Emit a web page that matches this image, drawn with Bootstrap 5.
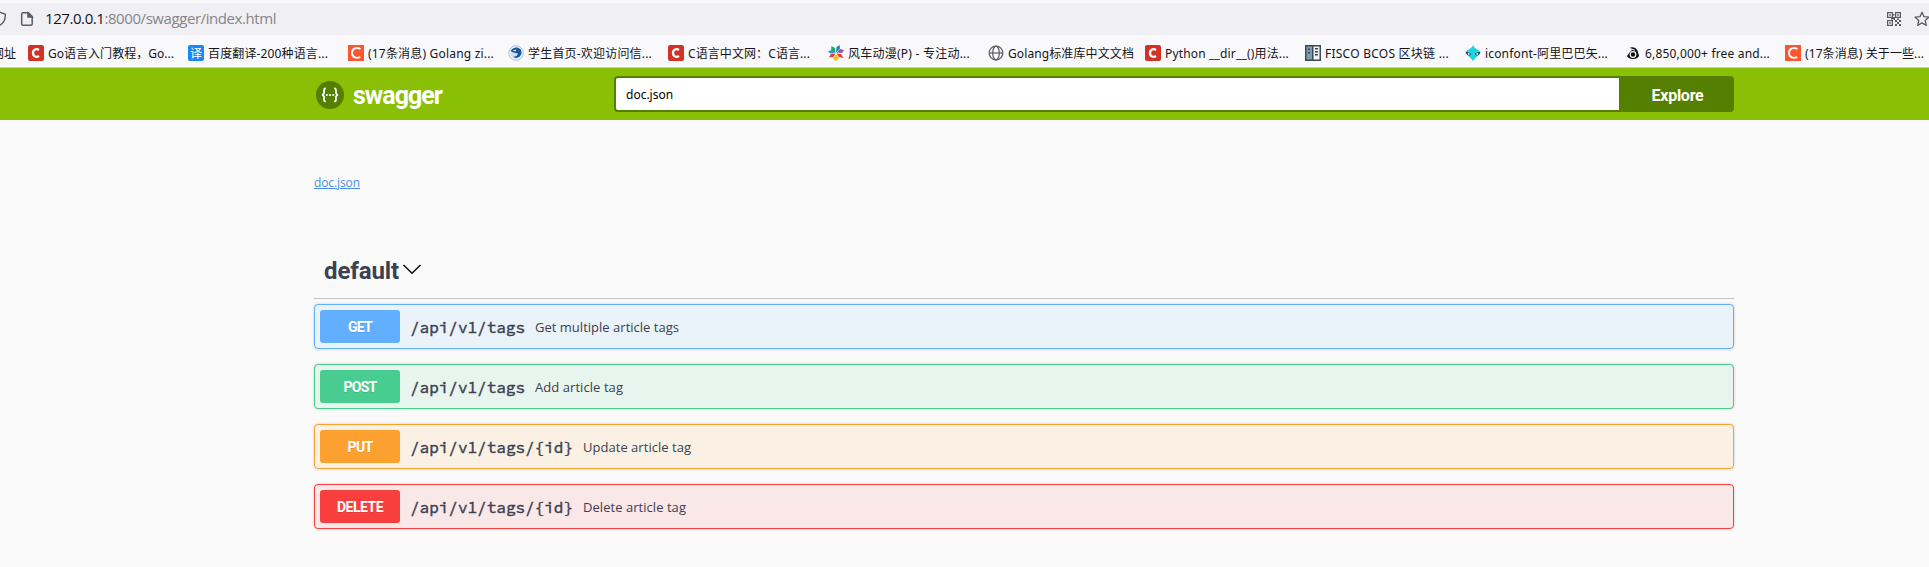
<!DOCTYPE html>
<html lang="zh-CN">
<head>
<meta charset="utf-8">
<title>Swagger UI</title>
<link rel="stylesheet" href="https://cdn.jsdelivr.net/npm/bootstrap@5.3.0/dist/css/bootstrap.min.css">
<style>
body{background:#fafafa;font-family:"Open Sans","Noto Sans CJK SC",sans-serif;color:#3b4151;overflow:hidden}
.chrome{background:#f9f9fb;height:68px;padding-top:3px;border-bottom:1px solid #ccccd1;color:#15141a}
.urlbar{height:32px;background:#f0f0f4;padding-left:20px;position:relative}
.url{font:15px "Open Sans",sans-serif;margin-left:11px;margin-bottom:2px;color:#15141a;white-space:nowrap}
.url i{font-style:normal;color:#85858b}
.shield{position:absolute;left:-9px;top:8px}
.star{margin:0 -1px 0 13px}
.marks{height:32px;position:relative;padding-left:28px;font:12px/16px "Noto Sans","Noto Sans CJK SC",sans-serif;white-space:nowrap}
.cut{position:absolute;left:-8px;top:11px}
.bm{width:160px;flex:none;padding-top:4px}
.bm svg{width:16px;height:16px;flex:none}
.bm span{position:relative;top:1px}
.bm.narrow{width:157px}
.topbar{background:#89bf04;height:52px}
.wrap{width:1420px;margin-left:314px}
.brand{width:300px;padding-left:2px}
.brand svg{position:relative;top:1px}
.brand span{font:700 25px/30px Roboto,sans-serif;color:#fff;margin-left:9px;padding-top:3px}
.topbar .form-control{width:1007px;height:36px;border:2px solid #547f00;border-radius:4px 0 0 4px;padding:0 10px;font:12px "Noto Sans",sans-serif;color:#000;background:#fff}
.topbar .btn{width:113px;height:36px;background:#547f00;border:0;border-radius:0 4px 4px 0;padding:2px 0 0;color:#fff;font:700 16px Roboto,sans-serif}
.doclink{margin-top:54px;height:18px;font-size:12px;line-height:18px}
.doclink a{color:#4990e2}
.taghead{margin-top:58px;height:49px;border-bottom:1px solid #c2c3c7;padding:0 10px 6px}
.taghead h4{font:700 24px/30px Roboto,sans-serif;margin:0 3px 0 0}
.taghead svg{margin-top:-2px}
.op{height:45px;border:1px solid;border-radius:4px;padding:0 5px;margin-bottom:15px;box-shadow:0 0 3px rgba(0,0,0,.19)}
.method{width:80px;height:33px;border-radius:3px;color:#fff;font:700 14px/34px Roboto,sans-serif;text-shadow:0 1px 0 rgba(0,0,0,.1)}
.route{font:16px "Source Code Pro","DejaVu Sans Mono",monospace;-webkit-text-stroke:.45px #3b4151;margin-left:10px}
.desc{font-size:13px;margin-left:10px;padding-top:2px}
.get{border-color:#61affe;background:#eaf2fa}.get .method{background:#61affe}
.post{border-color:#49cc90;background:#e8f4ee}.post .method{background:#49cc90}
.put{border-color:#fca130;background:#faf1e4}.put .method{background:#fca130}
.delete{border-color:#f93e3e;background:#fae7e7}.delete .method{background:#f93e3e}
</style>
</head>
<body>
<svg width="0" height="0" class="position-absolute"><defs>
<symbol id="c-red" viewBox="0 0 16 16"><rect width="16" height="16" rx="2" fill="#d33327"/><path d="M11 4.900C8.500 3.400 5 4.300 5 8s3.500 4.600 6 3.100" fill="none" stroke="#fff" stroke-width="2.300"/></symbol>
<symbol id="c-orange" viewBox="0 0 16 16"><rect width="16" height="16" fill="#fc5531"/><path d="M12.500 4C9 1.900 4 3.200 4 8s5 5.800 8.300 4" fill="none" stroke="#fff" stroke-width="1.900"/></symbol>
</defs></svg>
<header class="chrome">
 <div class="urlbar d-flex align-items-center">
  <svg class="shield" width="16" height="16" viewBox="0 0 16 16" fill="none" stroke="#5b5b66" stroke-width="1.400"><path d="M8 1l6.300 2.300c.3 5-1.500 9-6.300 11.500C3.200 12.300 1.400 8.300 1.700 3.300z"/></svg>
  <svg width="14" height="16" viewBox="0 0 14 16" fill="none" stroke="#5b5b66" stroke-width="1.500"><path d="M3 1.800h5.500L12.200 5.500V13q0 1.300-1.300 1.300H3Q1.700 14.300 1.700 13V3.100Q1.700 1.800 3 1.800z"/><path d="M8 2v4h4z" fill="#5b5b66"/></svg>
  <span class="url" data-w="231">127.0.0.1<i>:8000/swagger/index.html</i></span>
  <svg class="ms-auto" width="14" height="14" viewBox="0 0 14 14"><path fill="none" stroke="#5b5b66" stroke-width="1.200" d="M.6.600h4.800v4.800H.6zM8.600.600h4.800v4.800H8.600zM.6 8.600h4.800v4.800H.6z"/><path fill="#5b5b66" d="M2.200 2.200h1.600v1.600H2.200zM10.200 2.200h1.600v1.600h-1.600zM2.200 10.200h1.600v1.600H2.200zM6 2h1.500v1.500H6zM6 5h2v2H6zM4 6h2v1.500H4zM8 8h2v2H8zM12 8h2v2h-2zM10 10h2v2h-2zM8 12h2v2H8zM12 12h2v2h-2zM6.500 7H8v1H6.500zM10 6.500h2V8h-2z"/></svg>
  <svg class="star" width="16" height="16" viewBox="0 0 16 16" fill="none" stroke="#5b5b66" stroke-width="1.300" stroke-linejoin="round"><path d="M8 1.200l2 4.500 4.900.5-3.700 3.300 1.100 4.900L8 11.900l-4.300 2.500 1.100-4.900L1.100 6.200 6 5.700z"/></svg>
 </div>
 <nav class="marks d-flex align-items-center">
  <span class="cut" data-w="24">网址</span>
  <div class="bm d-flex gap-1"><svg><use href="#c-red"/></svg><span data-w="126">Go语言入门教程，Go...</span></div>
  <div class="bm d-flex gap-1"><svg viewBox="0 0 16 16"><rect width="16" height="16" rx="2" fill="#1989fa"/><text x="2" y="12.500" font-size="12" fill="#fff">译</text></svg><span data-w="120">百度翻译-200种语言...</span></div>
  <div class="bm d-flex gap-1"><svg><use href="#c-orange"/></svg><span data-w="126">(17条消息) Golang zi...</span></div>
  <div class="bm d-flex gap-1"><svg viewBox="0 0 16 16"><circle cx="8" cy="8" r="7.300" fill="#eef4fa" stroke="#a9c2de"/><circle cx="8" cy="8" r="5.500" fill="#cfdfee"/><path d="M2.500 6Q5 2 9.500 2.500L13 4.500 13.500 8.500Q12 12.500 8 13L5 12Q9.500 11.500 10 8.500L5.500 7.500z" fill="#17569b"/><path d="M4.500 5.500l4-1-1 1.800z" fill="#fff"/></svg><span data-w="124">学生首页-欢迎访问信...</span></div>
  <div class="bm d-flex gap-1"><svg><use href="#c-red"/></svg><span data-w="122">C语言中文网：C语言...</span></div>
  <div class="bm d-flex gap-1"><svg viewBox="0 0 16 16"><path d="M7.500 8L3 5.500 3.500 1 7 3z" fill="#22b14c"/><path d="M8 7.500L8.500 2l3-2 .5 3.500z" fill="#1b7fd4"/><path d="M8.500 7.500L12 4l4 1-2 3z" fill="#8a5aa8"/><path d="M8.500 8.500l4.500.5 2.500 4-4.500-1z" fill="#e8392f"/><path d="M8 9l3 4-3 3-3-2z" fill="#fbb917"/><path d="M7.500 8.500L5 12.500l-4-.5L3 9z" fill="#e63a30"/><path d="M7 8L2 8.500 0 6l4.500-1z" fill="#1b9bd8"/></svg><span data-w="122">风车动漫(P) - 专注动...</span></div>
  <div class="bm narrow d-flex gap-1"><svg viewBox="0 0 16 16" fill="none" stroke="#5b5b66" stroke-width="1.200"><circle cx="8" cy="8" r="6.900"/><ellipse cx="8" cy="8" rx="3.300" ry="6.900"/><path d="M1 8h14"/></svg><span data-w="126">Golang标准库中文文档</span></div>
  <div class="bm d-flex gap-1"><svg><use href="#c-red"/></svg><span data-w="124">Python __dir__()用法...</span></div>
  <div class="bm d-flex gap-1"><svg viewBox="0 0 16 16"><path d="M0 0h16v16H0z" fill="#3d4b55"/><path d="M1.500 1.500H7v13H1.500z" fill="#7f9baa"/><path d="M8.500 1.500h6v13h-6z" fill="#eef2f4"/><path d="M3 3.500h2V5H3zM3 7h2v1.500H3zM10 3h3v1.500h-3zM10 6h3v1.500h-3zM10 9h3v1.500h-3z" fill="#3d4b55"/></svg><span data-w="124">FISCO BCOS 区块链 ...</span></div>
  <div class="bm d-flex gap-1"><svg viewBox="0 0 16 16"><path d="M8 0q.8 2.800 3.500 4L14.500 6q.5 4-2.500 5.500L8 16l-4-4.500Q1 10 1.500 6l3-2Q7.200 2.800 8 0z" fill="#21d5dd"/><path d="M.5 6.500L6.300 8.500l-1.300 2Q1 10.500.5 6.500zM15.500 6.500L9.700 8.500l1.300 2Q15 10.500 15.500 6.500z" fill="#24476e"/><circle cx="3.800" cy="8.900" r=".9" fill="#fff"/><circle cx="12.200" cy="8.900" r=".9" fill="#fff"/></svg><span data-w="123">iconfont-阿里巴巴矢...</span></div>
  <div class="bm d-flex gap-1"><svg viewBox="0 0 16 16"><path d="M5 2.500q5-1.500 7.500 3L14 11Q12.500 14 8 14t-6-3L4.500 7.500 7 5z" fill="#111"/><circle cx="8" cy="9.500" r="2.800" fill="none" stroke="#fff" stroke-width="1.200"/><path d="M6 3.800l4 1.500" stroke="#fff"/></svg><span data-w="125">6,850,000+ free and...</span></div>
  <div class="bm d-flex gap-1"><svg><use href="#c-orange"/></svg><span data-w="119">(17条消息) 关于一些...</span></div>
 </nav>
</header>
<div class="topbar">
 <div class="wrap d-flex align-items-center h-100">
  <div class="brand d-flex align-items-center">
   <svg width="28" height="28" viewBox="0 0 28 28"><circle cx="14" cy="14" r="14" fill="#547f00"/><path d="M9.800 7.500C7 7.500 8.500 10 8 12.200q-.3 1.600-2 1.800 1.700.2 2 1.800c.5 2.200-1 4.700 1.800 4.700M18.200 7.500c2.800 0 1.300 2.500 1.800 4.700q.3 1.600 2 1.800-1.700.2-2 1.800c-.5 2.200 1 4.700-1.800 4.700" fill="none" stroke="#fff" stroke-width="1.800"/><g fill="#fff"><circle cx="10.800" cy="14" r="1.100"/><circle cx="14" cy="14" r="1.100"/><circle cx="17.200" cy="14" r="1.100"/></g></svg>
   <span data-w="89">swagger</span>
  </div>
  <input class="form-control shadow-none" value="doc.json">
  <button class="btn"><span data-w="52">Explore</span></button>
 </div>
</div>
<main class="wrap">
 <div class="doclink"><a href="#" data-w="46">doc.json</a></div>
 <div class="taghead d-flex align-items-center">
  <h4><span data-w="75">default</span></h4>
  <svg width="20" height="20" viewBox="0 0 20 20" fill="none" stroke="#111" stroke-width="1.500"><path d="M1.500 5L10 13.300 18.500 5"/></svg>
 </div>
 <section class="mt-1 pt-0">
  <div class="op get d-flex align-items-center position-relative" style="margin-top:5px"><span class="method text-center"><span data-w="24">GET</span></span><span class="route" data-w="115">/api/v1/tags</span><span class="desc" data-w="144">Get multiple article tags</span></div>
  <div class="op post d-flex align-items-center"><span class="method text-center"><span data-w="33">POST</span></span><span class="route" data-w="115">/api/v1/tags</span><span class="desc" data-w="88">Add article tag</span></div>
  <div class="op put d-flex align-items-center"><span class="method text-center"><span data-w="25">PUT</span></span><span class="route" data-w="163">/api/v1/tags/{id}</span><span class="desc" data-w="108">Update article tag</span></div>
  <div class="op delete d-flex align-items-center"><span class="method text-center"><span data-w="46">DELETE</span></span><span class="route" data-w="163">/api/v1/tags/{id}</span><span class="desc" data-w="103">Delete article tag</span></div>
 </section>
</main>
<script src="https://cdn.jsdelivr.net/npm/bootstrap@5.3.0/dist/js/bootstrap.bundle.min.js"></script>
<script>
// Track each label so that it fills its nominal width.
document.querySelectorAll('[data-w]').forEach(function (el) {
  var w = el.getBoundingClientRect().width, n = el.textContent.length;
  el.style.letterSpacing = ((el.dataset.w - w) / n).toFixed(3) + 'px';
});
</script>
</body>
</html>
